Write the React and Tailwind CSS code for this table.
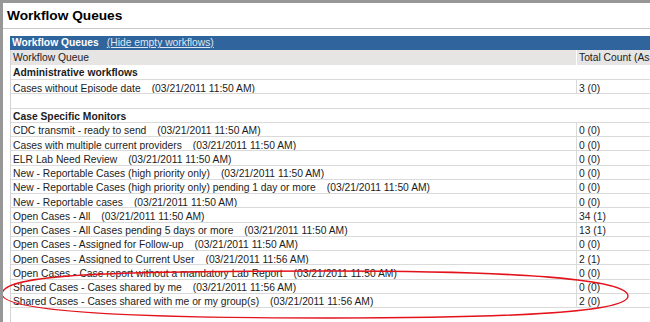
import React from "react";

const adminRows = [
  { name: "Cases without Episode date", time: "03/21/2011 11:50 AM", count: "3 (0)" },
];

const monitorRows = [
  { name: "CDC transmit - ready to send", time: "03/21/2011 11:50 AM", count: "0 (0)" },
  { name: "Cases with multiple current providers", time: "03/21/2011 11:50 AM", count: "0 (0)" },
  { name: "ELR Lab Need Review", time: "03/21/2011 11:50 AM", count: "0 (0)" },
  { name: "New - Reportable Cases (high priority only)", time: "03/21/2011 11:50 AM", count: "0 (0)" },
  { name: "New - Reportable Cases (high priority only) pending 1 day or more", time: "03/21/2011 11:50 AM", count: "0 (0)" },
  { name: "New - Reportable cases", time: "03/21/2011 11:50 AM", count: "0 (0)" },
  { name: "Open Cases - All", time: "03/21/2011 11:50 AM", count: "34 (1)" },
  { name: "Open Cases - All Cases pending 5 days or more", time: "03/21/2011 11:50 AM", count: "13 (1)" },
  { name: "Open Cases - Assigned for Follow-up", time: "03/21/2011 11:50 AM", count: "0 (0)" },
  { name: "Open Cases - Assigned to Current User", time: "03/21/2011 11:56 AM", count: "2 (1)" },
  { name: "Open Cases - Case report without a mandatory Lab Report", time: "03/21/2011 11:50 AM", count: "0 (0)" },
  { name: "Shared Cases - Cases shared by me", time: "03/21/2011 11:56 AM", count: "0 (0)" },
  { name: "Shared Cases - Cases shared with me or my group(s)", time: "03/21/2011 11:56 AM", count: "2 (0)" },
];

// one queue line: name + timestamp on the left, counts on the right
const QueueRow = ({ row }) => (
  <div className="flex h-[14.27px] border-b border-[#dadada]">
    <div className="w-[565px] pl-[2px] pt-[2.5px] leading-[11px] whitespace-nowrap overflow-hidden">
      {row.name}
      <span className="pl-[11px]">({row.time})</span>
    </div>
    <div className="flex-1 border-l border-[#dadada] pl-[2px] pt-[2.5px] leading-[11px]">
      {row.count}
    </div>
  </div>
);

const SectionRow = ({ label, tall }) => (
  <div
    className={`${tall ? "h-[15.5px]" : "h-[14.27px]"} border-b border-[#dadada] pl-[2px] pt-[2.5px] leading-[11px] font-bold`}
  >
    {label}
  </div>
);

const App = () => {
  return (
    <div className="relative w-[650px] h-[322px] overflow-hidden bg-white border-t-[3px] border-l-[3px] border-[#979797] font-['Liberation_Sans',Arial,sans-serif] text-[10.3px] text-[#1c1c1c]">
      {/* page title */}
      <div className="h-[26px] pt-[5px] pl-[4px] border-b border-[#c9c9c9] text-[13.7px] leading-[16px] font-bold text-black">
        Workflow Queues
      </div>

      {/* queues table */}
      <div className="ml-[7px] mt-[7px] w-[700px]">
        <div className="h-[13.5px] bg-[#30649c] pl-[2px] leading-[13.5px] text-white whitespace-nowrap">
          <span className="font-bold">Workflow Queues</span>
          <span className="ml-[8px] underline text-[#dde7f3]">(Hide empty workflows)</span>
        </div>

        <div className="border-l border-[#d4d4d4]">
          <div className="flex h-[15px] bg-[#e7e4e4]">
            <div className="w-[565px] pl-[2px] pt-[1.5px] leading-[14px]">Workflow Queue</div>
            <div className="flex-1 border-l border-white pl-[2px] pt-[1.5px] leading-[14px] whitespace-nowrap">
              Total Count (Assigned)
            </div>
          </div>

          <SectionRow label="Administrative workflows" tall />
          {adminRows.map((row, index) => (
            <QueueRow key={index} row={row} />
          ))}
          <div className="h-[14.27px] border-b border-[#dadada]" />

          <SectionRow label="Case Specific Monitors" />
          {monitorRows.map((row, index) => (
            <QueueRow key={index} row={row} />
          ))}
          <div className="h-[20px]" />
        </div>
      </div>

      {/* red hand-drawn annotation around the shared cases */}
      <svg
        className="absolute pointer-events-none"
        style={{ left: -3, top: -3 }}
        width="650"
        height="322"
        viewBox="0 0 650 322"
        fill="none"
      >
        <path
          d="M2 294 C2 274 110 271 330 271 C525 271 628 280 628 296 C628 312 520 318 330 318 C140 318 2 312 2 294 Z"
          stroke="#e3121b"
          strokeWidth="1.4"
        />
      </svg>
    </div>
  );
};

export default App;
